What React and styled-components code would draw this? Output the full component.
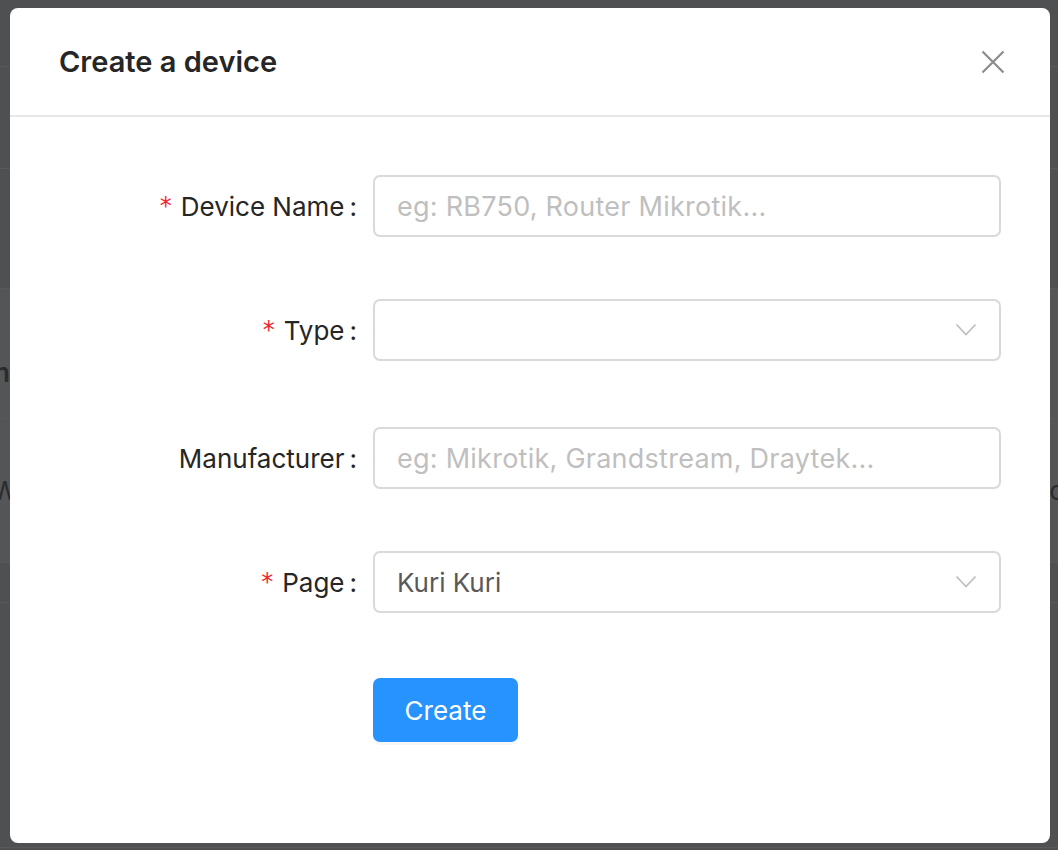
import React from "react";
import styled, { createGlobalStyle } from "styled-components";

const Global = createGlobalStyle`
  html, body { margin: 0; padding: 0; }
  body {
    width: 1058px;
    height: 850px;
    overflow: hidden;
    background: #4f5052;
    font-family: Inter, Roboto, "Liberation Sans", Arial, sans-serif;
  }
`;

const Backdrop = styled.div`
  display: flex;
  flex-direction: column;
  width: 1058px;
  height: 850px;
`;

const BgRow = styled.div`
  height: ${(p) => p.$h}px;
  box-sizing: border-box;
  padding-top: ${(p) => p.$pt || 0}px;
  background: ${(p) => (p.$light ? "#545557" : "#4f5052")};
  border-bottom: 1px solid #58595b;
  display: flex;
  align-items: ${(p) => (p.$pt ? "flex-start" : "center")};
  justify-content: space-between;
  color: #2a2b2d;
  font-size: 26px;
  font-weight: ${(p) => (p.$bold ? 600 : 400)};
  overflow: hidden;
`;

const BgText = styled.span`
  margin-left: ${(p) => p.$ml || 0}px;
  margin-right: ${(p) => p.$mr || 0}px;
`;

const Modal = styled.div`
  position: absolute;
  left: 10px;
  top: 8px;
  width: 1040px;
  height: 835px;
  background: #fff;
  border-radius: 8px;
  display: flex;
  flex-direction: column;
`;

const Header = styled.div`
  height: 109px;
  box-sizing: border-box;
  border-bottom: 2px solid #e8e8e8;
  display: flex;
  align-items: center;
  justify-content: space-between;
  padding: 0 44px 0 49px;
`;

const Title = styled.h2`
  margin: 0;
  font-size: 29px;
  font-weight: 600;
  color: #262626;
`;

const Close = styled.button`
  border: 0;
  background: none;
  padding: 0;
  width: 26px;
  height: 26px;
  display: flex;
  align-items: center;
  justify-content: center;
  cursor: pointer;
`;

const Body = styled.div`
  padding: 58px 49px 0 0;
  display: flex;
  flex-direction: column;
`;

const Row = styled.div`
  display: flex;
  align-items: center;
  height: 62px;
  margin-bottom: ${(p) => p.$mb}px;
`;

const Label = styled.label`
  width: 363px;
  box-sizing: border-box;
  padding-right: 16px;
  text-align: right;
  font-size: 26px;
  color: #262626;
  white-space: nowrap;
`;

const Star = styled.span`
  color: #f5222d;
  font-size: 24px;
  margin-right: 9px;
  font-family: SimSun, "DejaVu Sans", sans-serif;
  position: relative;
  top: -2px;
`;

const Colon = styled.span`
  margin-left: 5px;
`;

const Field = styled.div`
  flex: 1;
  height: 62px;
  box-sizing: border-box;
  border: 2px solid #d9d9d9;
  border-radius: 7px;
  display: flex;
  align-items: center;
  justify-content: space-between;
  padding: 0 22px 0 22px;
  font-size: 26px;
  color: #595959;
`;

const Placeholder = styled.span`
  font-size: 27px;
  letter-spacing: 0.25px;
  color: #bfbfbf;
`;

const Actions = styled.div`
  padding-left: 363px;
  margin-top: 3px;
`;

const Button = styled.button`
  width: 145px;
  height: 64px;
  border: 0;
  border-radius: 7px;
  background: #2693ff;
  color: #fff;
  font-size: 26px;
  font-family: inherit;
  box-shadow: 0 3px 0 rgba(0, 0, 0, 0.03);
  cursor: pointer;
`;

const Chevron = () => (
  <svg width="22" height="14" viewBox="0 0 22 14" fill="none">
    <path d="M1.5 1.5 L11 11.5 L20.5 1.5" stroke="#bfbfbf" strokeWidth="1.8" />
  </svg>
);

const XIcon = () => (
  <svg width="24" height="24" viewBox="0 0 24 24" fill="none">
    <path d="M1.5 1.5 L22.5 22.5 M22.5 1.5 L1.5 22.5" stroke="#8c8c8c" strokeWidth="2.2" />
  </svg>
);

const rows = [
  { label: "Device Name", req: true, value: "eg: RB750, Router Mikrotik...", ph: true, mb: 62 },
  { label: "Type", req: true, value: "", select: true, mb: 66 },
  { label: "Manufacturer", req: false, value: "eg: Mikrotik, Grandstream, Draytek...", ph: true, mb: 62 },
  { label: "Page", req: true, value: "Kuri Kuri", select: true, mb: 62 },
];

export default function App() {
  return (
    <>
      <Global />
      <Backdrop>
        <BgRow $h={67} />
        <BgRow $h={102} />
        <BgRow $h={120} />
        <BgRow $h={130} $light $bold $pt={68}>
          <BgText $ml={-6}>n</BgText>
        </BgRow>
        <BgRow $h={144} $light>
          <BgText $ml={-8}>Wr</BgText>
          <BgText $mr={-6}>c</BgText>
        </BgRow>
        <BgRow $h={40} />
        <BgRow $h={245} />
      </Backdrop>
      <Modal>
        <Header>
          <Title>Create a device</Title>
          <Close aria-label="Close">
            <XIcon />
          </Close>
        </Header>
        <Body>
          {rows.map((r) => (
            <Row key={r.label} $mb={r.mb}>
              <Label>
                {r.req && <Star>*</Star>}
                {r.label}
                <Colon>:</Colon>
              </Label>
              <Field>
                {r.ph ? <Placeholder>{r.value}</Placeholder> : <span>{r.value}</span>}
                {r.select && <Chevron />}
              </Field>
            </Row>
          ))}
          <Actions>
            <Button>Create</Button>
          </Actions>
        </Body>
      </Modal>
    </>
  );
}
